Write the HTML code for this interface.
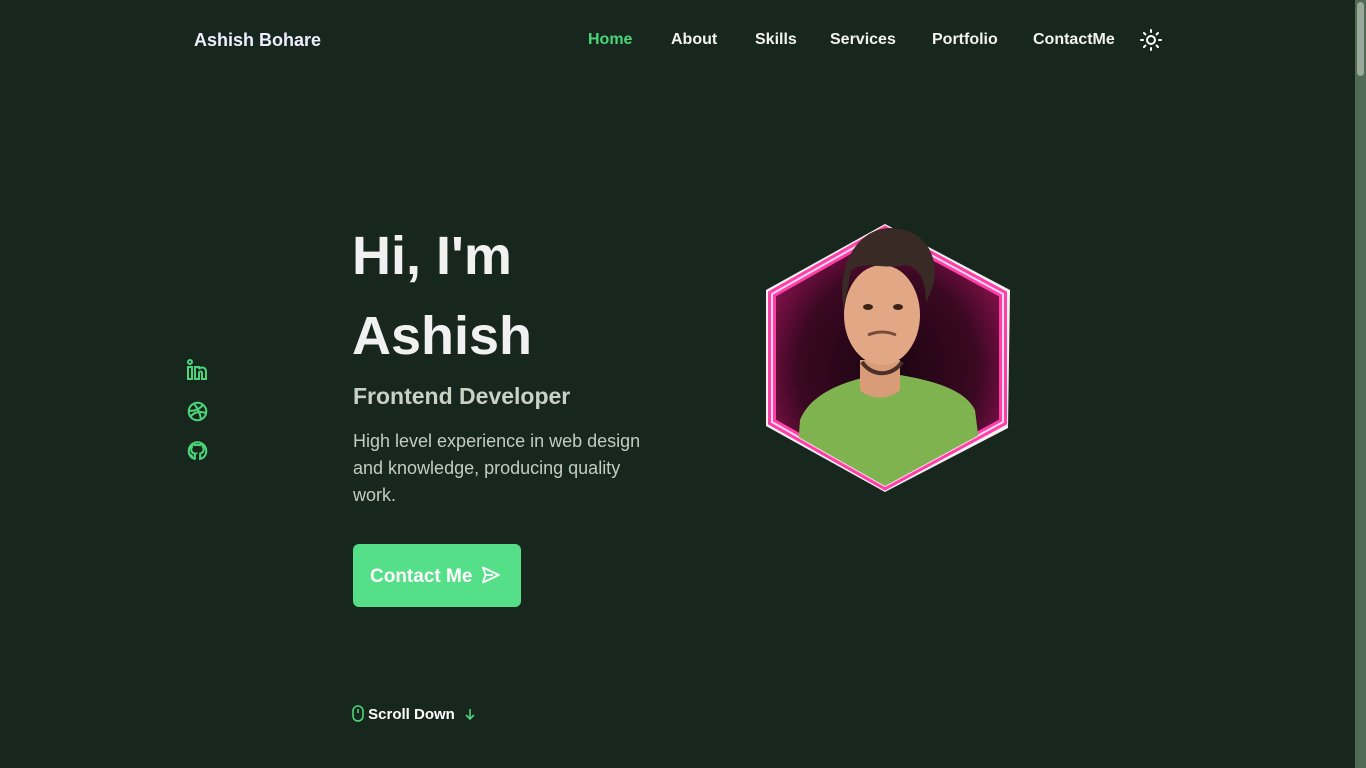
<!DOCTYPE html>
<html><head><meta charset="utf-8"><style>
*{margin:0;padding:0;box-sizing:border-box}
body{width:1366px;height:768px;background:#18271d;font-family:"Liberation Sans",sans-serif;overflow:hidden;position:relative;color:#fff}
.sb{position:absolute;right:0;top:0;width:11px;height:768px;background:#4f6b55}
.sb i{position:absolute;left:2px;top:2px;width:7px;height:74px;background:#9aa89c;border-radius:4px}
.logo{position:absolute;left:194px;top:30px;font-size:18px;font-weight:bold;color:#eef}
.nav{position:absolute;top:31px;font-size:16px;font-weight:bold;color:#f2f2f2}
h1{position:absolute;left:352px;font-size:54px;font-weight:bold;color:#f1f1f1;letter-spacing:0}
.sub{position:absolute;left:353px;top:383px;font-size:23px;color:#c9d1c6;font-weight:bold}
.desc{position:absolute;left:353px;top:428px;width:400px;font-size:18px;line-height:27px;color:#c2ccbf;white-space:nowrap}
.btn{position:absolute;left:353px;top:544px;width:168px;height:63px;background:#55df88;border-radius:6px;color:#fff;font-size:19px;font-weight:bold;padding:21px 0 0 17px}
.scroll{position:absolute;left:352px;top:705px;font-size:15px;font-weight:bold;color:#fff}
</style></head><body>
<div class="sb"><i></i></div>
<div class="logo">Ashish Bohare</div>
<div class="nav" style="left:588px;color:#4cd47a">Home</div>
<div class="nav" style="left:671px">About</div>
<div class="nav" style="left:755px">Skills</div>
<div class="nav" style="left:830px">Services</div>
<div class="nav" style="left:932px">Portfolio</div>
<div class="nav" style="left:1033px">ContactMe</div>
<svg style="position:absolute;left:1140px;top:29px" width="22" height="22" viewBox="0 0 22 22" stroke="#fff" stroke-width="2" fill="none" stroke-linecap="round"><circle cx="11" cy="11" r="4"/><path d="M11 1v2M11 19v2M1 11h2M19 11h2M4 4l1.4 1.4M16.6 16.6L18 18M4 18l1.4-1.4M16.6 5.4L18 4"/></svg>

<svg style="position:absolute;left:186px;top:359px" width="24" height="24" viewBox="0 0 24 24" fill="none" stroke="#4cd47a" stroke-width="2"><circle cx="4" cy="3" r="2"/><rect x="2" y="8" width="4" height="12"/><path d="M9 20V8h4v2c1-2 7-3 7 3v7h-4v-6c0-2-3-2-3 0v6z"/></svg>
<svg style="position:absolute;left:187px;top:401px" width="21" height="21" viewBox="0 0 24 24" fill="none" stroke="#4cd47a" stroke-width="2.4"><circle cx="12" cy="12" r="10"/><path d="M8 3c4 5 7 11 8 18M2 11c6 1 11-1 16-6M4 18c4-5 10-7 18-4"/></svg>
<svg style="position:absolute;left:187px;top:440px" width="21" height="22" viewBox="0 0 24 24" fill="none" stroke="#4cd47a" stroke-width="2.4" stroke-linecap="round"><path d="M9 21c-4-1-7-4-7-9a10 10 0 0 1 20 0c0 5-3 8-7 9v-4c0-1-.5-2-1-2 3 0 5-2 5-5 0-1-.3-2-1-3 .2-1 .2-2-.2-3-1 0-2 .5-3 1.3a10 10 0 0 0-5.6 0C8 4.5 7 4 6 4c-.4 1-.4 2-.2 3-.7 1-1 2-1 3 0 3 2 5 5 5-.6.5-.8 1.3-.8 2v4M3 16c2 0 2 2 3 2"/></svg>

<h1 style="top:225px">Hi, I'm</h1>
<h1 style="top:305px">Ashish</h1>
<div class="sub">Frontend Developer</div>
<div class="desc">High level experience in web design<br>and knowledge, producing quality<br>work.</div>
<div class="btn">Contact Me <svg style="vertical-align:-3px;margin-left:2px" width="21" height="20" viewBox="0 0 24 24" fill="none" stroke="#fff" stroke-width="2.2" stroke-linejoin="round"><path d="M3 3l19 9-19 9 3-9zM6 12h9"/></svg></div>
<div class="scroll"><svg style="vertical-align:-3px" width="12" height="17" viewBox="0 0 12 17" fill="none" stroke="#4cd47a" stroke-width="1.6"><rect x="1" y="1" width="10" height="15" rx="5"/><path d="M6 4v4"/></svg> Scroll Down <svg style="margin-left:6px;vertical-align:-1px" width="10" height="12" viewBox="0 0 10 12" fill="none" stroke="#4cd47a" stroke-width="1.6"><path d="M5 1v10M1 7l4 4 4-4"/></svg></div>

<svg style="position:absolute;left:760px;top:210px" width="260" height="290" viewBox="0 0 260 290">
<defs><radialGradient id="g" cx="50%" cy="55%" r="55%"><stop offset="0" stop-color="#1a0410"/><stop offset="0.7" stop-color="#3a0822"/><stop offset="1" stop-color="#7a1045"/></radialGradient>
<clipPath id="c"><polygon points="125,20 243,84 243,212 125,276 12,212 12,84"/></clipPath></defs>
<polygon points="125,14 250,80 248,218 125,282 6,216 6,80" fill="#f4f0f2"/>
<polygon points="125,20 243,84 243,212 125,276 12,212 12,84" fill="url(#g)" stroke="#ff3fa8" stroke-width="8"/>
<polygon points="125,20 243,84 243,212 125,276 12,212 12,84" fill="none" stroke="#ffd6ee" stroke-width="2"/>
<g clip-path="url(#c)">
<path d="M40 210c10-25 40-38 75-45h25c35 6 65 15 75 35l10 80H35z" fill="#7fb350"/>
<path d="M100 150h40v30c-10 10-30 10-40 0z" fill="#d99c78"/>
</g>
<ellipse cx="122" cy="105" rx="38" ry="50" fill="#e2a886"/>
<path d="M84 100c-8-40 10-80 45-82 30 0 50 20 45 55l-8 20c0-20-5-35-20-38-25 5-40-5-55 5z" fill="#3a2a26"/>
<path d="M102 152c10 15 30 15 40 0" stroke="#4a3028" stroke-width="4" fill="none"/>
<ellipse cx="108" cy="97" rx="5" ry="3" fill="#3a2418"/><ellipse cx="138" cy="97" rx="5" ry="3" fill="#3a2418"/>
<path d="M108 125q14-6 28 0" stroke="#7a4a38" stroke-width="3" fill="none"/>
</svg>
</body></html>
